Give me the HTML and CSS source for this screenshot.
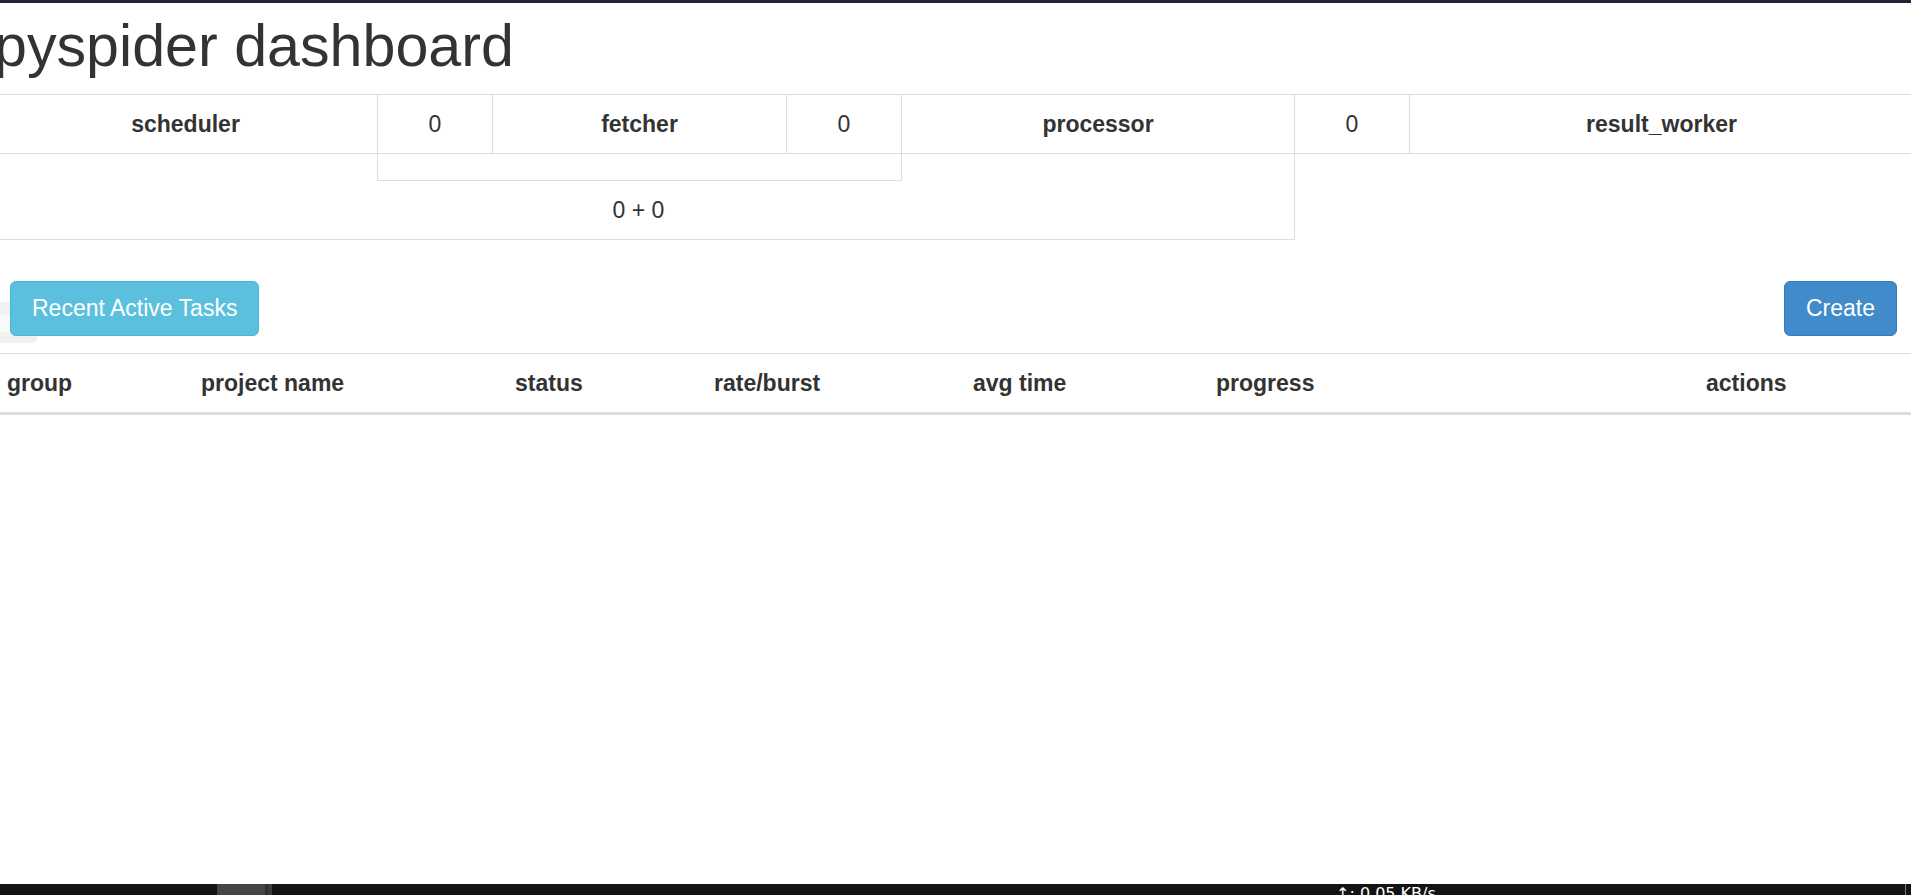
FILE: index.html
```html
<!DOCTYPE html>
<html lang="en">
<head>
<meta charset="utf-8">
<title>pyspider dashboard</title>
<link rel="stylesheet" href="styles.css">
</head>
<body>
<div class="page">
  <div class="topbar"></div>
  <div class="content">
    <h1 class="title">pyspider dashboard</h1>

    <div class="queue">
      <div class="queue-row">
        <div class="q-cell q-name q-first">scheduler</div>
        <div class="q-cell q-value">0</div>
        <div class="q-cell q-name">fetcher</div>
        <div class="q-cell q-value">0</div>
        <div class="q-cell q-name">processor</div>
        <div class="q-cell q-value">0</div>
        <div class="q-cell q-name q-last">result_worker</div>
      </div>
      <div class="queue-lower">
        <div class="q-box"></div>
        <div class="q-total">0 + 0</div>
      </div>
    </div>

    <div class="toolbar">
      <div class="ghost"><div class="ghost-inner"></div></div>
      <button class="btn btn-info">Recent Active Tasks</button>
      <button class="btn btn-primary">Create</button>
    </div>

    <table class="projects">
      <colgroup>
        <col class="c-group">
        <col class="c-name">
        <col class="c-status">
        <col class="c-rate">
        <col class="c-avg">
        <col class="c-progress">
        <col class="c-actions">
      </colgroup>
      <thead>
        <tr>
          <th>group</th>
          <th>project name</th>
          <th>status</th>
          <th>rate/burst</th>
          <th>avg time</th>
          <th>progress</th>
          <th>actions</th>
        </tr>
      </thead>
      <tbody></tbody>
    </table>
  </div>

  <div class="spacer"></div>

  <div class="taskbar">
    <div class="tb-gap"></div>
    <div class="tb-app"></div>
    <div class="tb-app-edge"></div>
    <div class="tb-app-edge2"></div>
    <div class="tb-fill"></div>
    <div class="tb-net">↑: 0.05 KB/s</div>
    <div class="tb-fill2"></div>
    <div class="tb-line"></div>
    <div class="tb-end"></div>
  </div>
</div>
</body>
</html>
```

FILE: styles.css
```css
html, body {
  margin: 0;
  padding: 0;
  overflow: hidden;
  background: #ffffff;
}

body {
  font-family: "Liberation Sans", Arial, sans-serif;
  color: #333333;
}

.page {
  height: 895px;
  display: flex;
  flex-direction: column;
}

.topbar {
  height: 3px;
  background: #24223a;
  flex: none;
}

.content {
  margin-left: -6px;
  width: 1919px;
  flex: none;
}

.title {
  margin: 13px 0 19px 0;
  font-size: 59.2px;
  line-height: 59px;
  height: 59px;
  font-weight: 400;
  color: #333333;
  white-space: nowrap;
}

/* queue info */
.queue-row {
  display: grid;
  grid-template-columns: 384px 115px 294px 115px 393px 115px 503px;
  border-top: 1px solid #dddddd;
  border-bottom: 1px solid #dddddd;
}

.q-cell {
  box-sizing: border-box;
  height: 58px;
  line-height: 58px;
  font-size: 23px;
  text-align: center;
  border-right: 1px solid #dddddd;
  white-space: nowrap;
}

.q-name {
  font-weight: 700;
}

.q-value {
  font-weight: 400;
}

.q-last {
  border-right: none;
}

.queue-lower {
  box-sizing: border-box;
  width: 1301px;
  border-right: 1px solid #dddddd;
  border-bottom: 1px solid #dddddd;
}

.q-box {
  box-sizing: border-box;
  margin-left: 383px;
  width: 525px;
  height: 27px;
  border-left: 1px solid #dddddd;
  border-right: 1px solid #dddddd;
  border-bottom: 1px solid #dddddd;
}

.q-total {
  height: 58px;
  line-height: 58px;
  font-size: 23px;
  text-align: center;
  padding-right: 11px;
}

/* toolbar */
.toolbar {
  position: relative;
  display: flex;
  justify-content: space-between;
  align-items: flex-start;
  padding: 41px 16px 0 16px;
  margin-bottom: 17px;
}

.ghost {
  position: absolute;
  left: 0;
  top: 62px;
  width: 43px;
  height: 41px;
  border-radius: 5px;
  background: #f1f1f1;
}

.ghost-inner {
  margin-top: 13px;
  width: 23px;
  height: 17px;
  border-radius: 3px;
  background: #f9f9f9;
}

.btn {
  position: relative;
  box-sizing: border-box;
  height: 55px;
  margin: 0;
  padding: 10px 21px;
  font-family: "Liberation Sans", Arial, sans-serif;
  font-size: 23px;
  line-height: 33px;
  color: #ffffff;
  border: 1px solid transparent;
  border-radius: 6px;
  white-space: nowrap;
}

.btn-info {
  background: #5bc0de;
  border-color: #46b8da;
}

.btn-primary {
  background: #428bca;
  border-color: #357ebd;
}

/* projects table */
.projects {
  width: 1919px;
  table-layout: fixed;
  border-collapse: separate;
  border-spacing: 0;
}

.c-group { width: 194px; }
.c-name { width: 314px; }
.c-status { width: 199px; }
.c-rate { width: 259px; }
.c-avg { width: 243px; }
.c-progress { width: 490px; }
.c-actions { width: 220px; }

.projects th {
  padding: 0 13px;
  height: 58px;
  line-height: 58px;
  font-size: 23px;
  font-weight: 700;
  text-align: left;
  white-space: nowrap;
  border-top: 1px solid #dddddd;
  border-bottom: 3px solid #dddddd;
}

.spacer {
  flex: 1;
}

/* taskbar */
.taskbar {
  flex: none;
  height: 11px;
  background: #131313;
  display: flex;
  overflow: hidden;
}

.tb-gap { width: 217px; flex: none; }
.tb-app { width: 48px; flex: none; background: #454545; }
.tb-app-edge { width: 3px; flex: none; background: #2e2e2e; }
.tb-app-edge2 { width: 4px; flex: none; background: #3c3c3c; }
.tb-fill { width: 1064px; flex: none; }

.tb-net {
  flex: none;
  width: 104px;
  padding-top: 2px;
  font-family: "DejaVu Sans", "Liberation Sans", sans-serif;
  font-size: 16px;
  line-height: 16px;
  color: #ffffff;
  white-space: nowrap;
}

.tb-fill2 { flex: 1; }
.tb-line { width: 1px; flex: none; background: #7a7a7a; }
.tb-end { width: 5px; flex: none; }
```
